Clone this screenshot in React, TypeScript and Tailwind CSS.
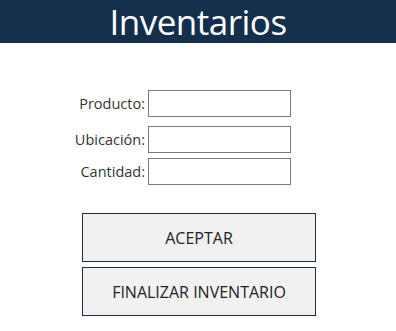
export default function App() {
  const font = { fontFamily: '"Open Sans", "Noto Sans", sans-serif' };
  return (
    <div className="w-[396px] h-[331px] bg-white" style={font}>
      <div className="h-[43px] bg-[#142f4c] flex items-center justify-center overflow-hidden">
        <span className="text-white text-[35px] leading-[43px] tracking-[-0.5px]">Inventarios</span>
      </div>
      <div className="flex flex-col pl-[60px] pt-[47px]">
        <div className="flex items-center h-[27px]">
          <span className="w-[88px] text-right text-[14.5px] text-[#333] pr-[3px]">Producto:</span>
          <input className="w-[143px] h-[27px] border border-[#7a7a7a] bg-white outline-none" />
        </div>
        <div className="flex items-center h-[27px] mt-[9px]">
          <span className="w-[88px] text-right text-[14.5px] text-[#333] pr-[3px]">Ubicación:</span>
          <input className="w-[143px] h-[27px] border border-[#7a7a7a] bg-white outline-none" />
        </div>
        <div className="flex items-center h-[27px] mt-[5px]">
          <span className="w-[88px] text-right text-[14.5px] text-[#333] pr-[3px]">Cantidad:</span>
          <input className="w-[143px] h-[27px] border border-[#7a7a7a] bg-white outline-none" />
        </div>
      </div>
      <div className="flex flex-col pl-[82px] pt-[28px] gap-[5px]">
        <button className="w-[234px] h-[49px] border border-[#1b2e45] bg-[#f1f1f1] text-[16px] text-[#222]">ACEPTAR</button>
        <button className="w-[234px] h-[49px] border border-[#1b2e45] bg-[#f1f1f1] text-[16px] text-[#222]">FINALIZAR INVENTARIO</button>
      </div>
    </div>
  );
}
